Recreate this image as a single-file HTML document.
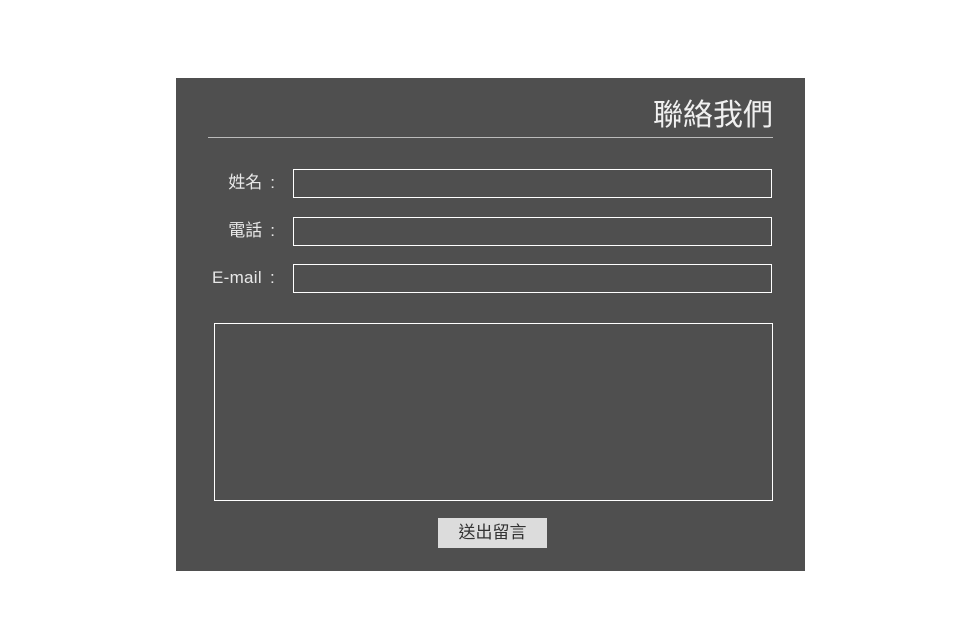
<!DOCTYPE html>
<html><head><meta charset="utf-8"><style>
body{margin:0;width:980px;height:640px;background:#fff;position:relative;font-family:"Liberation Sans","Noto Sans CJK TC",sans-serif;}
#p{position:absolute;left:176px;top:78px;width:629px;height:493px;background:#4f4f4f;}
.a{position:absolute;}
.t{top:97px;color:#f0f0f0;font-size:30px;line-height:38px;}
.line{left:208px;top:137px;width:565px;height:1px;background:#bbb;}
.lab{color:#e8e8e8;font-size:17px;line-height:22px;text-align:right;width:100px;left:175px;}
.lab span{display:inline-block;margin-left:8px;}
.in{left:293px;width:477px;height:27px;border:1px solid #fff;}
.ta{left:214px;top:323px;width:557px;height:176px;border:1px solid #fff;}
.btn{left:438px;top:518px;width:109px;height:30px;background:#dcdcdc;color:#333;font-size:17px;line-height:30px;text-align:center;}
</style></head><body>
<div id="p"></div>
<div class="a t" style="right:207px">聯絡我們</div>
<div class="a line"></div>
<div class="a lab" style="top:172px">姓名<span>:</span></div>
<div class="a lab" style="top:220px">電話<span>:</span></div>
<div class="a lab" style="top:267px;letter-spacing:0.3px">E-mail<span>:</span></div>
<div class="a in" style="top:169px"></div>
<div class="a in" style="top:217px"></div>
<div class="a in" style="top:264px"></div>
<div class="a ta"></div>
<div class="a btn">送出留言</div>
</body></html>
